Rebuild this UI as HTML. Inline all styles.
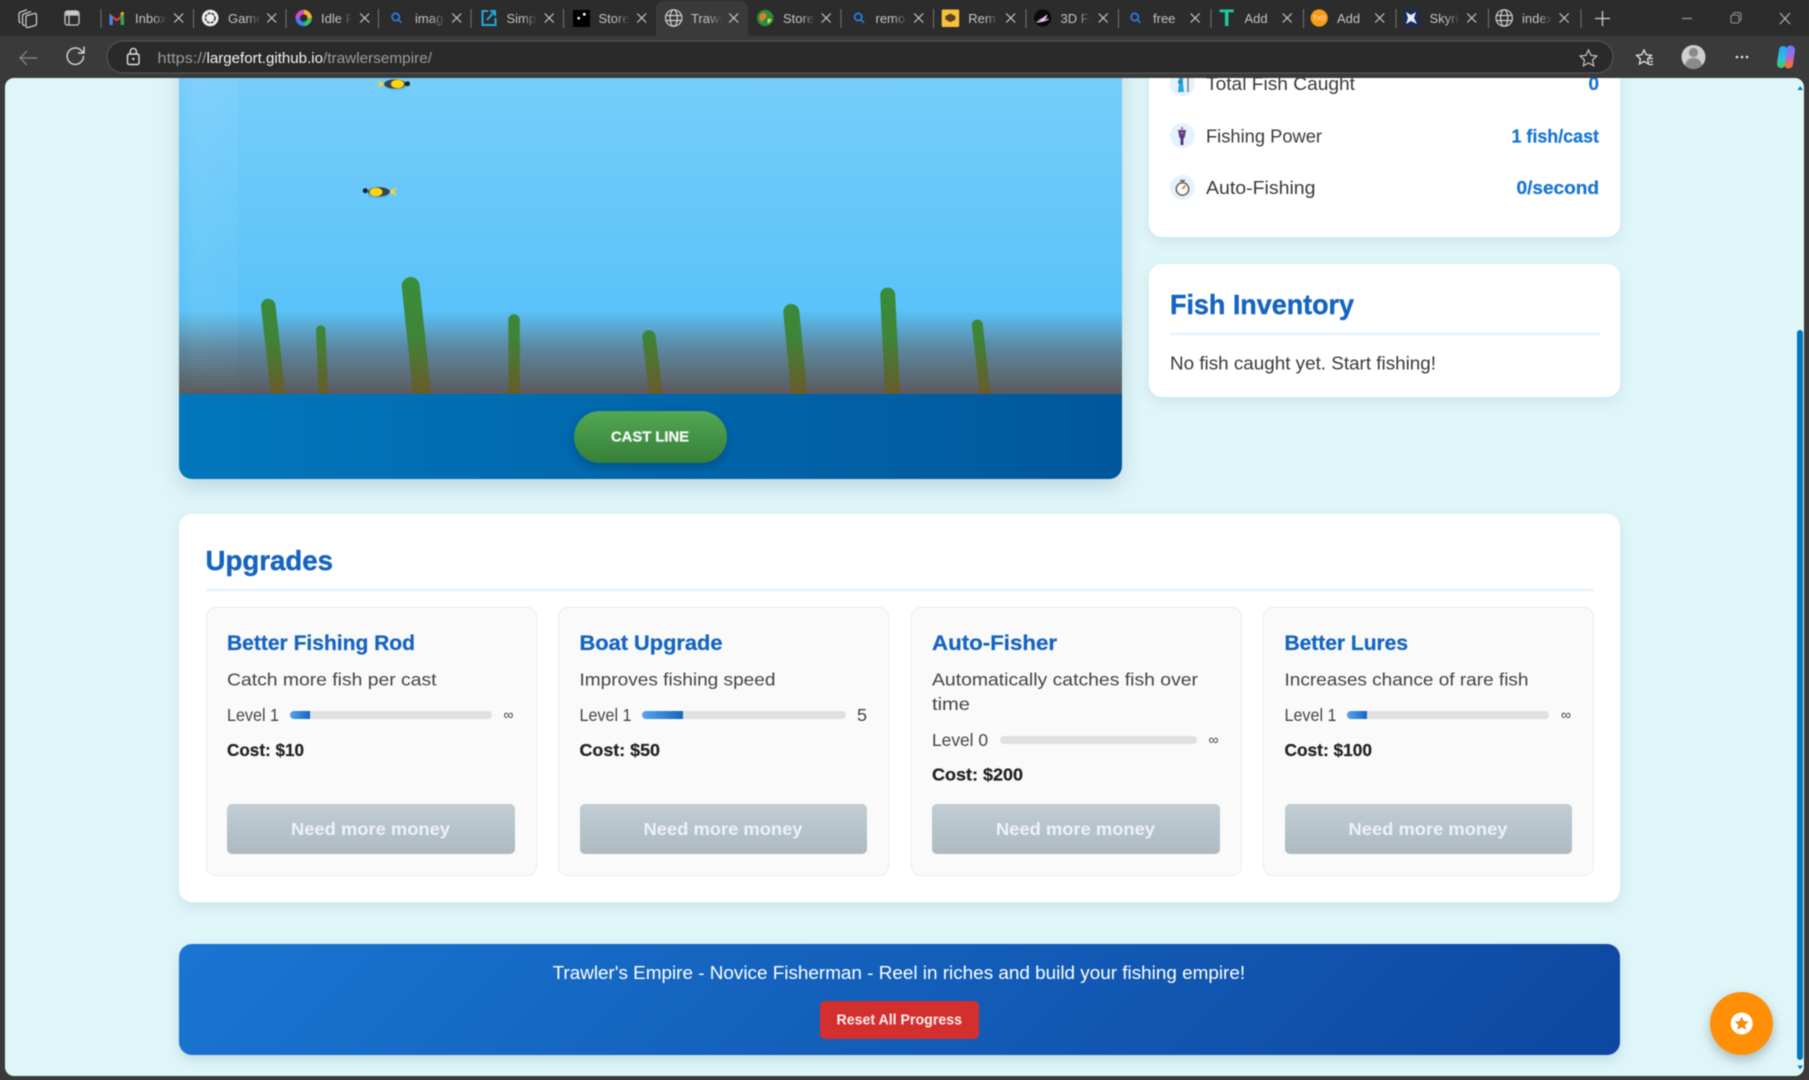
<!DOCTYPE html>
<html lang="en">
<head>
<meta charset="utf-8">
<title>Trawler's Empire</title>
<style>
html,body{margin:0;padding:0;width:1809px;height:1080px;overflow:hidden;background:#3a3a3a;font-family:"Liberation Sans",sans-serif}
#root{position:absolute;left:0;top:0;width:1809px;height:1080px;filter:blur(.4px)}
#page{position:absolute;left:5px;top:78px;width:1799px;height:998px;overflow:hidden;border-radius:9px;background:#dff6f9}
#inner{position:absolute;left:-5px;top:-78px;width:1809px;height:1080px}
.box{position:absolute;box-sizing:border-box}
.panel{background:#fff;border-radius:13px;box-shadow:0 5px 14px rgba(0,60,90,.09)}
.card{background:#fafafa;border:1px solid #ececec;border-radius:10px;top:606.5px;height:269px;width:331px}
.btn{background:linear-gradient(#c2cdd4,#adbac2);border-radius:5px;height:50px;top:803.5px;width:287.5px}
.bar{background:#e0e0e0;border-radius:5px;height:8px}
.fill{background:linear-gradient(90deg,#58a5ea,#1565c0);border-radius:5px 0 0 5px;height:8px}
text{font-family:"Liberation Sans",sans-serif}
.h2{font-size:28px;font-weight:700;fill:#1565c0;stroke:#1565c0;stroke-width:.4}
.h3{font-size:21px;font-weight:700;fill:#1565c0;stroke:#1565c0;stroke-width:.25}
.d{font-size:17.5px;fill:#444}
.c{font-size:17.5px;font-weight:700;fill:#222;stroke:#222;stroke-width:.2}
.b{font-size:17.5px;font-weight:700;fill:#eef2f4}
.s{font-size:18.5px;fill:#3a3a3a}
.v{font-size:18.5px;font-weight:700;fill:#1976d2;stroke:#1976d2;stroke-width:.25}
.lb{font-size:13px;fill:#c2c2c2}
</style>
</head>
<body>
<div id="root">
<div id="page"><div id="inner">

  <!-- game panel -->
  <div class="box" style="left:179px;top:40px;width:943px;height:439px;border-radius:13px;overflow:hidden;box-shadow:0 8px 22px rgba(0,50,80,.16);background:linear-gradient(90deg,#0277bd,#01579b)">
    <div class="box" style="left:0;top:0;width:943px;height:354px;background:linear-gradient(#7bcffb 0,#5ac3f9 76%,#5ac3f9 76%)"></div>
    <div class="box" style="left:0;top:270px;width:943px;height:84px;background:linear-gradient(rgba(93,88,88,0),rgba(93,88,88,.55) 45%,#5c5a5c)"></div>
    <div class="box" style="left:0;top:0;width:59px;height:354px;background:linear-gradient(90deg,rgba(255,255,255,0),rgba(255,255,255,.08) 30%,rgba(255,255,255,.05));-webkit-mask-image:linear-gradient(#000 76%,rgba(0,0,0,.15));mask-image:linear-gradient(#000 76%,rgba(0,0,0,.15))"></div>
  </div>
  <div class="box" style="left:574px;top:411px;width:153px;height:52px;border-radius:26px;background:linear-gradient(#52a854,#367f38);box-shadow:0 4px 10px rgba(0,30,60,.28)"></div>

  <!-- stats -->
  <div class="box panel" style="left:1149px;top:40px;width:471px;height:197px"></div>
  <div class="box" style="left:1170px;top:71px;width:25px;height:25px;border-radius:50%;background:#e3f2fd"></div>
  <div class="box" style="left:1170px;top:123px;width:25px;height:25px;border-radius:50%;background:#e3f2fd"></div>
  <div class="box" style="left:1170px;top:175px;width:25px;height:25px;border-radius:50%;background:#e3f2fd"></div>

  <!-- inventory -->
  <div class="box panel" style="left:1149px;top:264px;width:471px;height:133px"></div>
  <div class="box" style="left:1170px;top:333px;width:430px;height:2px;background:#e3f2fd"></div>

  <!-- upgrades -->
  <div class="box panel" style="left:179px;top:514px;width:1441px;height:388px"></div>
  <div class="box" style="left:205.5px;top:589px;width:1388px;height:2px;background:#e3f2fd"></div>

  <div class="box card" style="left:205.5px"></div>
  <div class="box card" style="left:557.5px"></div>
  <div class="box card" style="left:910.5px"></div>
  <div class="box card" style="left:1263px"></div>

  <div class="box bar" style="left:290px;top:711px;width:202px"></div>
  <div class="box fill" style="left:290px;top:711px;width:20px"></div>
  <div class="box bar" style="left:642px;top:711px;width:204px"></div>
  <div class="box fill" style="left:642px;top:711px;width:41px"></div>
  <div class="box bar" style="left:1000px;top:736px;width:197px"></div>
  <div class="box bar" style="left:1347px;top:711px;width:202px"></div>
  <div class="box fill" style="left:1347px;top:711px;width:20px"></div>

  <div class="box btn" style="left:227px"></div>
  <div class="box btn" style="left:579.5px"></div>
  <div class="box btn" style="left:932px"></div>
  <div class="box btn" style="left:1284.5px"></div>

  <!-- footer -->
  <div class="box" style="left:179px;top:944px;width:1441px;height:111px;border-radius:13px;background:linear-gradient(135deg,#1976d2,#0d47a1);box-shadow:0 5px 12px rgba(0,60,90,.14)"></div>
  <div class="box" style="left:820px;top:1001px;width:159px;height:38px;border-radius:5px;background:#d32f2f"></div>

  <!-- fab -->
  <div class="box" style="left:1710px;top:992px;width:63px;height:63px;border-radius:50%;background:#ff8f06;box-shadow:0 5px 12px rgba(0,0,0,.25)"></div>

  <!-- scrollbar -->
  <div class="box" style="left:1797px;top:330px;width:6px;height:730px;border-radius:3px;background:#0277bd"></div>

  <svg width="1809" height="1080" viewBox="0 0 1809 1080" style="position:absolute;left:0;top:0">
    <defs>
      <linearGradient id="weed" gradientUnits="userSpaceOnUse" x1="0" y1="280" x2="0" y2="394">
        <stop offset="0" stop-color="#388e3c"/><stop offset=".5" stop-color="#3f8438"/><stop offset="1" stop-color="#6a5a2a"/>
      </linearGradient>
      <clipPath id="seaclip"><rect x="179" y="78" width="943" height="316"/></clipPath>
      <filter id="fs" x="-30%" y="-30%" width="160%" height="180%"><feGaussianBlur stdDeviation="1"/></filter>
    </defs>

    <g clip-path="url(#seaclip)" fill="none" stroke="url(#weed)" stroke-linecap="round">
      <path d="M268.3 306 L279 402" stroke-width="14.5"/>
      <path d="M320.7 330 L323.7 402" stroke-width="9.5"/>
      <path d="M410.7 286 L423 402" stroke-width="18"/>
      <path d="M514 320 L514.3 402" stroke-width="11.5"/>
      <path d="M649 337 L657 402" stroke-width="13.5"/>
      <path d="M791.3 312 L800 402" stroke-width="16"/>
      <path d="M887.7 295 L893 402" stroke-width="15"/>
      <path d="M977.3 325 L986 402" stroke-width="11"/>
    </g>

    <!-- fish 1 -->
    <g>
      <ellipse cx="396" cy="86" rx="10" ry="3.5" fill="#2b5a80" opacity=".35" filter="url(#fs)"/>
      <path d="M385 84 L377 80 L380 84 L377 88 Z" fill="#ffd51c"/>
      <ellipse cx="395" cy="84" rx="11" ry="4.6" fill="#37474f"/>
      <ellipse cx="397.5" cy="84" rx="6.5" ry="4.2" fill="#ffd600"/>
      <circle cx="407.5" cy="83.7" r="2.5" fill="#0c2238"/>
    </g>
    <!-- fish 2 -->
    <g>
      <ellipse cx="378" cy="194" rx="10" ry="3.5" fill="#2b5a80" opacity=".35" filter="url(#fs)"/>
      <path d="M388 191.700 L397 187.500 L394 191.700 L397 196 Z" fill="#ffd51c"/>
      <ellipse cx="379" cy="191.700" rx="11" ry="4.600" fill="#37474f"/>
      <ellipse cx="376" cy="192" rx="6.500" ry="4.200" fill="#ffd600"/>
      <circle cx="365.300" cy="190.700" r="2.500" fill="#0c2238"/>
    </g>

    <text x="611" y="441.7" textLength="78" lengthAdjust="spacingAndGlyphs" style="font-size:14.5px;font-weight:700;fill:#f3f8f3;stroke:#f3f8f3;stroke-width:.3">CAST LINE</text>

    <!-- stat icons -->
    <g>
      <path d="M1179 78h4v6l1 8h-6l1-8z" fill="#29a3dc"/><circle cx="1180" cy="82" r="2" fill="#1b8fc7"/>
      <path d="M1188 78v14" stroke="#78808a" stroke-width="1.6"/>
    </g>
    <g>
      <path d="M1178 130h8l-1.500 8h-5z" fill="#5a3b8c"/>
      <rect x="1180.600" y="138" width="2.800" height="7" fill="#4a2f78"/>
      <rect x="1181" y="127" width="2" height="3.500" fill="#88889a"/>
      <circle cx="1182" cy="133" r="1.300" fill="#e05a6a"/>
    </g>
    <g fill="none">
      <circle cx="1182.500" cy="189" r="6.200" stroke="#6d5a50" stroke-width="1.500" fill="#fdfaf5"/>
      <path d="M1180 180.600h5M1182.500 181v2" stroke="#6d5a50" stroke-width="1.500"/>
      <path d="M1182.500 189l2.800-3.400" stroke="#d9534f" stroke-width="1.400"/>
    </g>

    <text class="s" x="1206" y="90" textLength="149" lengthAdjust="spacingAndGlyphs">Total Fish Caught</text>
    <text class="v" x="1588.5" y="90" textLength="10.5" lengthAdjust="spacingAndGlyphs">0</text>
    <text class="s" x="1206" y="142.5" textLength="116" lengthAdjust="spacingAndGlyphs">Fishing Power</text>
    <text class="v" x="1511.5" y="142.5" textLength="87.5" lengthAdjust="spacingAndGlyphs">1 fish/cast</text>
    <text class="s" x="1206" y="194" textLength="109.5" lengthAdjust="spacingAndGlyphs">Auto-Fishing</text>
    <text class="v" x="1516.5" y="194" textLength="82.5" lengthAdjust="spacingAndGlyphs">0/second</text>

    <text class="h2" x="1170" y="314" textLength="184" lengthAdjust="spacingAndGlyphs">Fish Inventory</text>
    <text x="1170" y="369.5" textLength="266" lengthAdjust="spacingAndGlyphs" style="font-size:18.5px;fill:#3a3a3a">No fish caught yet. Start fishing!</text>

    <text class="h2" x="205.5" y="570" textLength="127.5" lengthAdjust="spacingAndGlyphs">Upgrades</text>

    <!-- card 1 -->
    <text class="h3" x="227" y="650" textLength="188" lengthAdjust="spacingAndGlyphs">Better Fishing Rod</text>
    <text class="d" x="227" y="685.5" textLength="209.5" lengthAdjust="spacingAndGlyphs">Catch more fish per cast</text>
    <text class="d" x="227" y="721" textLength="52" lengthAdjust="spacingAndGlyphs">Level 1</text>
    <text x="503.5" y="719.5" textLength="10" lengthAdjust="spacingAndGlyphs" style="font-size:14px;fill:#444">∞</text>
    <text class="c" x="227" y="756" textLength="77" lengthAdjust="spacingAndGlyphs">Cost: $10</text>
    <text class="b" x="291" y="835" textLength="159" lengthAdjust="spacingAndGlyphs">Need more money</text>

    <!-- card 2 -->
    <text class="h3" x="579.5" y="650" textLength="143" lengthAdjust="spacingAndGlyphs">Boat Upgrade</text>
    <text class="d" x="579.5" y="685.5" textLength="196" lengthAdjust="spacingAndGlyphs">Improves fishing speed</text>
    <text class="d" x="579.5" y="721" textLength="52" lengthAdjust="spacingAndGlyphs">Level 1</text>
    <text x="857" y="721" textLength="10" lengthAdjust="spacingAndGlyphs" style="font-size:17.5px;fill:#444">5</text>
    <text class="c" x="579.5" y="756" textLength="80.5" lengthAdjust="spacingAndGlyphs">Cost: $50</text>
    <text class="b" x="643.5" y="835" textLength="159" lengthAdjust="spacingAndGlyphs">Need more money</text>

    <!-- card 3 -->
    <text class="h3" x="932" y="650" textLength="125" lengthAdjust="spacingAndGlyphs">Auto-Fisher</text>
    <text class="d" x="932" y="685.5" textLength="266" lengthAdjust="spacingAndGlyphs">Automatically catches fish over</text>
    <text class="d" x="932" y="710" textLength="38" lengthAdjust="spacingAndGlyphs">time</text>
    <text class="d" x="932" y="746" textLength="56" lengthAdjust="spacingAndGlyphs">Level 0</text>
    <text x="1208.5" y="744.5" textLength="10" lengthAdjust="spacingAndGlyphs" style="font-size:14px;fill:#444">∞</text>
    <text class="c" x="932" y="780.5" textLength="91" lengthAdjust="spacingAndGlyphs">Cost: $200</text>
    <text class="b" x="996" y="835" textLength="159" lengthAdjust="spacingAndGlyphs">Need more money</text>

    <!-- card 4 -->
    <text class="h3" x="1284.500" y="650" textLength="123.5" lengthAdjust="spacingAndGlyphs">Better Lures</text>
    <text class="d" x="1284.500" y="685.5" textLength="244" lengthAdjust="spacingAndGlyphs">Increases chance of rare fish</text>
    <text class="d" x="1284.500" y="721" textLength="52" lengthAdjust="spacingAndGlyphs">Level 1</text>
    <text x="1561" y="719.5" textLength="10" lengthAdjust="spacingAndGlyphs" style="font-size:14px;fill:#444">∞</text>
    <text class="c" x="1284.500" y="756" textLength="87.5" lengthAdjust="spacingAndGlyphs">Cost: $100</text>
    <text class="b" x="1348.5" y="835" textLength="159" lengthAdjust="spacingAndGlyphs">Need more money</text>

    <!-- footer -->
    <text x="552.6" y="979" textLength="692.5" lengthAdjust="spacingAndGlyphs" style="font-size:18.5px;fill:#fff">Trawler's Empire - Novice Fisherman - Reel in riches and build your fishing empire!</text>
    <text x="836.5" y="1024.5" textLength="125.5" lengthAdjust="spacingAndGlyphs" style="font-size:14.5px;font-weight:700;fill:#fdeeee">Reset All Progress</text>

    <!-- fab icon -->
    <circle cx="1741.7" cy="1023.5" r="11" fill="#fff"/>
    <path d="M1741.7 1016.5l2.1 4.6 5 .5-3.8 3.3 1.2 4.9-4.5-2.6-4.5 2.6 1.2-4.9-3.8-3.3 5-.5z" fill="#f58a07"/>

    <!-- scroll arrows -->
    <path d="M1797.5 90l2.7-4 2.7 4z" fill="#0277bd"/>
    <path d="M1797.5 1065.5l2.7 4 2.7-4z" fill="#0277bd"/>
  </svg>
</div></div>

<!-- browser chrome -->
<svg width="1809" height="78" viewBox="0 0 1809 78" style="position:absolute;left:0;top:0;display:block">
  <defs>
    <linearGradient id="ft" x1="0" x2="1" y1="0" y2="0"><stop offset="0" stop-color="#2c2c2c" stop-opacity="0"/><stop offset="1" stop-color="#2c2c2c"/></linearGradient>
    <linearGradient id="ft2" x1="0" x2="1" y1="0" y2="0"><stop offset="0" stop-color="#3a3a3a" stop-opacity="0"/><stop offset="1" stop-color="#3a3a3a"/></linearGradient>
    <linearGradient id="cpa" x1="0" y1="0" x2="0" y2="1"><stop offset="0" stop-color="#2ea8f5"/><stop offset=".7" stop-color="#27c7d8"/><stop offset="1" stop-color="#49c77a"/></linearGradient>
    <linearGradient id="cpb" x1="0" y1="0" x2="0" y2="1"><stop offset="0" stop-color="#6f7cf5"/><stop offset=".55" stop-color="#c05fd6"/><stop offset="1" stop-color="#f2703d"/></linearGradient>
  </defs>
  <rect width="1809" height="36" fill="#2c2c2c"/>
  <rect y="36" width="1809" height="42" fill="#3a3a3a"/>
  <path d="M656 36V10q0-9 9-9h74q9 0 9 9v26z" fill="#3a3a3a"/>
  <rect x="107" y="41" width="1506" height="32" rx="16" fill="#2a2a2a" stroke="#5a5a5a"/>

  <!-- left icons -->
  <g fill="none" stroke="#c8c8c8" stroke-width="1.3">
    <path d="M27 15.5l7.500-2q2-.4 2 1.500v8.500q0 1.500-1.500 2l-7 2q-2 .4-2-1.500v-8.500q0-1.500 1-2z"/>
    <path d="M25 25.500q-2.500 0-2.500-2.500v-7q0-1.500 1.500-2l7-2.500"/>
    <path d="M20.500 23q-1.500-.5-1.500-2.500v-6.500q0-1.500 1.500-2l6.500-2.200"/>
    <rect x="65" y="11" width="14" height="14" rx="2.500"/>
    <path d="M65 15h14M69 15v10"/>
  </g>
  <rect x="66" y="11.500" width="12" height="3.500" fill="#c8c8c8"/>

  <!-- tabs: favicon, label, fade -->
  <g transform="translate(101,0)">
    <path d="M8.500 25V13.500l7.200 5.500 7.200-5.500V25h-3.200v-6.500l-4 3-4-3V25z" fill="#ea4335"/>
    <path d="M8.500 14v11h3.200v-8.500z" fill="#4285f4"/><path d="M22.900 14v11h-3.200v-8.500z" fill="#34a853"/>
    <path d="M19.700 16.200l3.200-2.600v-1l-1.500-1-1.700 1.300z" fill="#fbbc04"/>
    <text class="lb" x="34" y="23">Inbox</text><rect x="52" y="8" width="14" height="20" fill="url(#ft)"/><rect x="66" y="8" width="24" height="20" fill="#2c2c2c"/>
  </g>
  <g transform="translate(194.500,0)">
    <circle cx="15.700" cy="18" r="8.300" fill="#f0f0f0"/><circle cx="15.700" cy="18" r="4.800" fill="none" stroke="#3a3a3a" stroke-width="1.600" stroke-dasharray="3 1"/>
    <text class="lb" x="33.500" y="23">Game</text><rect x="52" y="8" width="14" height="20" fill="url(#ft)"/><rect x="66" y="8" width="24" height="20" fill="#2c2c2c"/>
  </g>
  <g transform="translate(288,0)" fill="none" stroke-width="4.400">
    <path d="M15.700 12a6 6 0 0 1 6 6" stroke="#f5b32a"/><path d="M21.700 18a6 6 0 0 1-6 6" stroke="#3fbb6d"/>
    <path d="M15.700 24a6 6 0 0 1-6-6" stroke="#3a7df0"/><path d="M9.700 18a6 6 0 0 1 6-6" stroke="#d946c8"/>
    <text class="lb" x="33" y="23" stroke="none" style="stroke:none;fill:#c2c2c2">Idle F</text><rect x="50" y="8" width="14" height="20" fill="url(#ft)" stroke="none"/><rect x="64" y="8" width="24" height="20" fill="#2c2c2c" stroke="none"/>
  </g>
  <g transform="translate(381,0)">
    <circle cx="14.700" cy="17" r="3.600" fill="none" stroke="#2b7de9" stroke-width="1.700"/><path d="M17.400 19.700l3 3" stroke="#2b7de9" stroke-width="1.700"/>
    <text class="lb" x="34" y="23">image</text><rect x="50" y="8" width="14" height="20" fill="url(#ft)"/><rect x="64" y="8" width="24" height="20" fill="#2c2c2c"/>
  </g>
  <g transform="translate(473,0)">
    <g fill="none" stroke="#22a6e6" stroke-width="2"><path d="M15 11h-5.500v14h13v-7"/><path d="M14 20l7-8M17 11h5v5"/></g>
    <text class="lb" x="33.500" y="23">Simple</text><rect x="50" y="8" width="14" height="20" fill="url(#ft)"/><rect x="64" y="8" width="24" height="20" fill="#2c2c2c"/>
  </g>
  <g transform="translate(565.500,0)">
    <rect x="7.500" y="10" width="17" height="17" fill="#000"/><rect x="12" y="17" width="2.400" height="2.400" fill="#fff"/><rect x="17.500" y="13" width="2.600" height="2.600" fill="#fff"/>
    <text class="lb" x="33" y="23">Store</text><rect x="50" y="8" width="14" height="20" fill="url(#ft)"/><rect x="64" y="8" width="24" height="20" fill="#2c2c2c"/>
  </g>
  <g transform="translate(658,0)">
    <g fill="none" stroke="#d0d0d0" stroke-width="1.200"><circle cx="15.700" cy="18" r="8.200"/><ellipse cx="15.700" cy="18" rx="3.600" ry="8.200"/><path d="M7.800 15.500h15.800M7.800 20.500h15.800"/></g>
    <text class="lb" x="33" y="23">Trawler</text><rect x="50" y="8" width="14" height="20" fill="url(#ft2)"/><rect x="64" y="8" width="24" height="20" fill="#3a3a3a"/>
  </g>
  <g transform="translate(749.500,0)">
    <circle cx="15.700" cy="18" r="8.200" fill="#2e8b3e"/><path d="M11 14c3-2 6-1 6 2s-4 3-4 6c-3-1-4-5-2-8z" fill="#e0802c"/><path d="M18 19c2-1 4 0 4 1-1 2-3 4-4 3z" fill="#c7d94a"/>
    <text class="lb" x="33.500" y="23">Store</text><rect x="52" y="8" width="14" height="20" fill="url(#ft)"/><rect x="66" y="8" width="24" height="20" fill="#2c2c2c"/>
  </g>
  <g transform="translate(843.500,0)">
    <circle cx="14.700" cy="17" r="3.600" fill="none" stroke="#2b7de9" stroke-width="1.700"/><path d="M17.400 19.700l3 3" stroke="#2b7de9" stroke-width="1.700"/>
    <text class="lb" x="32" y="23">remo</text><rect x="50" y="8" width="14" height="20" fill="url(#ft)"/><rect x="64" y="8" width="24" height="20" fill="#2c2c2c"/>
  </g>
  <g transform="translate(934.700,0)">
    <rect x="7" y="9.500" width="17.500" height="17.500" rx="1.500" fill="#f7c23b"/><path d="M15.700 13.500l5 2.600v3.400l-5 2.800-5-2.800v-3.400z" fill="#5a4420"/>
    <text class="lb" x="33.500" y="23">Rem</text><rect x="50" y="8" width="14" height="20" fill="url(#ft)"/><rect x="64" y="8" width="24" height="20" fill="#2c2c2c"/>
  </g>
  <g transform="translate(1027,0)">
    <circle cx="15.700" cy="18" r="8.600" fill="#0a0a0a"/><path d="M10.500 20.500c3-1 6-3.500 10-6-1 3.500-2.500 6-5 6.500z" fill="#f3c0e6"/><path d="M9.500 22c4 0 8-1 12-3" stroke="#dfe6ff" stroke-width="1.100" fill="none"/>
    <text class="lb" x="33.500" y="23">3D Fi</text><rect x="50" y="8" width="14" height="20" fill="url(#ft)"/><rect x="64" y="8" width="24" height="20" fill="#2c2c2c"/>
  </g>
  <g transform="translate(1120,0)">
    <circle cx="14.700" cy="17" r="3.600" fill="none" stroke="#2b7de9" stroke-width="1.700"/><path d="M17.400 19.700l3 3" stroke="#2b7de9" stroke-width="1.700"/>
    <text class="lb" x="33" y="23">free</text>
  </g>
  <g transform="translate(1211,0)">
    <text x="15.700" y="26" text-anchor="middle" style="font-family:'Liberation Sans',sans-serif;font-size:24px;font-weight:700;fill:#1fc8a5">T</text>
    <text class="lb" x="33.500" y="23">Add</text>
  </g>
  <g transform="translate(1303.500,0)">
    <circle cx="15.700" cy="18" r="8.600" fill="#f59b16"/><text x="15.700" y="20.500" text-anchor="middle" style="font-size:7px;fill:#ffe3b5">TxD</text>
    <text class="lb" x="33.500" y="23">Add</text>
  </g>
  <g transform="translate(1396,0)">
    <rect x="7.500" y="9.500" width="16.500" height="17" rx="2" fill="#1c2a58"/><path d="M10 12l5 3 5-3-2 6 3 6-6-3-5 3 2-6z" fill="#e6ecf8"/>
    <text class="lb" x="33.500" y="23">Skyrim</text><rect x="50" y="8" width="14" height="20" fill="url(#ft)"/><rect x="64" y="8" width="24" height="20" fill="#2c2c2c"/>
  </g>
  <g transform="translate(1488.500,0)">
    <g fill="none" stroke="#d0d0d0" stroke-width="1.200"><circle cx="15.700" cy="18" r="8.200"/><ellipse cx="15.700" cy="18" rx="3.600" ry="8.200"/><path d="M7.800 15.500h15.800M7.800 20.500h15.800"/></g>
    <text class="lb" x="33.500" y="23">index</text><rect x="50" y="8" width="14" height="20" fill="url(#ft)"/><rect x="64" y="8" width="24" height="20" fill="#2c2c2c"/>
  </g>

  <!-- separators -->
  <g stroke="#6a6a6a" stroke-width="1.200">
    <path d="M101 9v19M193.500 9v19M286 9v19M378.500 9v19M471 9v19M563.500 9v19M841 9v19M933.500 9v19M1026 9v19M1118.500 9v19M1211 9v19M1303.500 9v19M1396 9v19M1488.500 9v19M1581 9v19"/>
  </g>

  <!-- close Xs -->
  <g stroke="#c8c8c8" stroke-width="1.200" fill="none">
    <path d="M174.200 13.500l9 9m0-9l-9 9"/>
    <path d="M267.200 13.500l9 9m0-9l-9 9"/>
    <path d="M360.200 13.500l9 9m0-9l-9 9"/>
    <path d="M452.200 13.500l9 9m0-9l-9 9"/>
    <path d="M544.700 13.500l9 9m0-9l-9 9"/>
    <path d="M637.200 13.500l9 9m0-9l-9 9"/>
    <path d="M729.200 13.500l9 9m0-9l-9 9"/>
    <path d="M821.700 13.500l9 9m0-9l-9 9"/>
    <path d="M914.200 13.500l9 9m0-9l-9 9"/>
    <path d="M1006.200 13.500l9 9m0-9l-9 9"/>
    <path d="M1098.700 13.500l9 9m0-9l-9 9"/>
    <path d="M1190.700 13.500l9 9m0-9l-9 9"/>
    <path d="M1282.700 13.500l9 9m0-9l-9 9"/>
    <path d="M1375.200 13.500l9 9m0-9l-9 9"/>
    <path d="M1467.200 13.500l9 9m0-9l-9 9"/>
    <path d="M1559.700 13.500l9 9m0-9l-9 9"/>
  </g>

  <!-- new tab + window controls -->
  <path d="M1602.500 11v15M1595 18.500h15" stroke="#d0d0d0" stroke-width="1.300"/>
  <path d="M1682 18.500h10" stroke="#999" stroke-width="1.200"/>
  <g fill="none" stroke="#8f8f8f" stroke-width="1.100"><rect x="1731" y="15" width="8" height="8" rx="1.500"/><path d="M1733.500 15v-1.500q0-1 1-1h4.500q2 0 2 2v5q0 1-1.500 1"/></g>
  <path d="M1780 13l10 11m0-11l-10 11" stroke="#b0b0b0" stroke-width="1.200"/>

  <!-- nav -->
  <path d="M37 58H21m6-7l-7 7 7 7" fill="none" stroke="#7f7f7f" stroke-width="1.400"/>
  <path d="M83.500 56a8.200 8.200 0 1 1-2.400-5.600L84 53m0-6.500V53h-6" fill="none" stroke="#d8d8d8" stroke-width="1.400"/>
  <g fill="none" stroke="#e0e0e0" stroke-width="1.400"><rect x="127.500" y="54" width="11.500" height="10.500" rx="1.800"/><path d="M130.200 54v-2.500a3.100 3.100 0 0 1 6.200 0V54"/></g>
  <circle cx="133.300" cy="59" r="1.200" fill="#e0e0e0"/>
  <text x="157.500" y="63" textLength="49" lengthAdjust="spacingAndGlyphs" style="font-size:14.800px;fill:#9c9c9c">https://</text>
  <text x="206.500" y="63" textLength="116.500" lengthAdjust="spacingAndGlyphs" style="font-size:14.800px;fill:#f4f4f4">largefort.github.io</text>
  <text x="323" y="63" textLength="109" lengthAdjust="spacingAndGlyphs" style="font-size:14.800px;fill:#9c9c9c">/trawlersempire/</text>

  <!-- right toolbar -->
  <path d="M1588.500 50l2.500 5.300 5.800.7-4.300 4 1.200 5.800-5.200-2.900-5.200 2.900 1.200-5.800-4.300-4 5.800-.7z" fill="none" stroke="#c4c4c4" stroke-width="1.200"/>
  <path d="M1644 50l2.200 4.700 5.200.6-3.800 3.600 1 5.100-4.600-2.600-4.600 2.600 1-5.100-3.800-3.600 5.200-.6z" fill="none" stroke="#e2e2e2" stroke-width="1.300"/>
  <path d="M1649 58.500h4M1650 61.500h3M1649 64.500h4" stroke="#e2e2e2" stroke-width="1.200"/>
  <circle cx="1693.500" cy="57" r="12" fill="#cfcfcf"/><circle cx="1693.500" cy="52.500" r="4.600" fill="#8a8a8a"/><path d="M1685 65.500c1-5.500 4.500-7.500 8.500-7.500s7.500 2 8.500 7.500a12 12 0 0 1-17 0z" fill="#8a8a8a"/>
  <g fill="#e6e6e6"><circle cx="1737" cy="57" r="1.300"/><circle cx="1742" cy="57" r="1.300"/><circle cx="1747" cy="57" r="1.300"/></g>
  <path d="M1790.500 50 L1788.500 64" stroke="url(#cpb)" stroke-width="9" stroke-linecap="round" fill="none"/>
  <path d="M1783 50 L1781 64" stroke="url(#cpa)" stroke-width="8" stroke-linecap="round" fill="none"/>
</svg>
</div>
</body>
</html>
